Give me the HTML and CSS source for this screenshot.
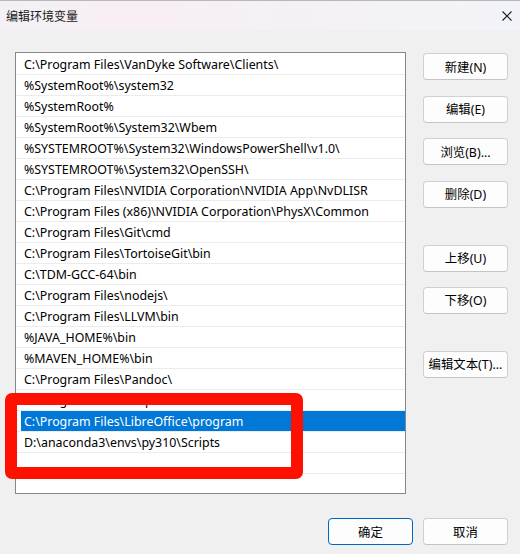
FILE: index.html
```html
<!DOCTYPE html>
<html lang="zh-CN">
<head>
<meta charset="utf-8">
<title>编辑环境变量</title>
<link rel="stylesheet" href="styles.css">
</head>
<body>
<div class="window">
  <div class="titlebar">
    <span class="title">编辑环境变量</span>
    <svg class="close" width="10" height="10" viewBox="0 0 10 10"><path d="M0.5 0.5L9.5 9.5M9.5 0.5L0.5 9.5" stroke="#1a1a1a" stroke-width="1.1" fill="none"/></svg>
  </div>
  <div class="content">
    <div class="main">
      <div class="listbox">
        <div class="row"><span class="cell">C:\Program Files\VanDyke Software\Clients\</span></div>
        <div class="row"><span class="cell">%SystemRoot%\system32</span></div>
        <div class="row"><span class="cell">%SystemRoot%</span></div>
        <div class="row"><span class="cell">%SystemRoot%\System32\Wbem</span></div>
        <div class="row"><span class="cell">%SYSTEMROOT%\System32\WindowsPowerShell\v1.0\</span></div>
        <div class="row"><span class="cell">%SYSTEMROOT%\System32\OpenSSH\</span></div>
        <div class="row"><span class="cell">C:\Program Files\NVIDIA Corporation\NVIDIA App\NvDLISR</span></div>
        <div class="row"><span class="cell">C:\Program Files (x86)\NVIDIA Corporation\PhysX\Common</span></div>
        <div class="row"><span class="cell">C:\Program Files\Git\cmd</span></div>
        <div class="row"><span class="cell">C:\Program Files\TortoiseGit\bin</span></div>
        <div class="row"><span class="cell">C:\TDM-GCC-64\bin</span></div>
        <div class="row"><span class="cell">C:\Program Files\nodejs\</span></div>
        <div class="row"><span class="cell">C:\Program Files\LLVM\bin</span></div>
        <div class="row"><span class="cell">%JAVA_HOME%\bin</span></div>
        <div class="row"><span class="cell">%MAVEN_HOME%\bin</span></div>
        <div class="row"><span class="cell">C:\Program Files\Pandoc\</span></div>
        <div class="row"><span class="cell">C:\Program Files\Graphviz\bin\</span></div>
        <div class="row selected"><span class="cell">C:\Program Files\LibreOffice\program</span></div>
        <div class="row"><span class="cell">D:\anaconda3\envs\py310\Scripts</span></div>
        <div class="row"><span class="cell"></span></div>
        <div class="row"><span class="cell"></span></div>
      </div>
      <div class="side">
        <div class="group group-a">
          <button class="btn">新建(N)</button>
          <button class="btn">编辑(E)</button>
          <button class="btn">浏览(B)...</button>
          <button class="btn">删除(D)</button>
        </div>
        <div class="group group-b">
          <button class="btn">上移(U)</button>
          <button class="btn">下移(O)</button>
        </div>
        <div class="group group-c">
          <button class="btn">编辑文本(T)...</button>
        </div>
      </div>
    </div>
    <div class="footer">
      <button class="btn primary">确定</button>
      <button class="btn">取消</button>
    </div>
  </div>
  <div class="mark"></div>
</div>
</body>
</html>
```

FILE: styles.css
```css
* { box-sizing: border-box; }
html, body { margin: 0; padding: 0; }
body {
  background: #f0f0f0;
  font-family: "Noto Sans", "Noto Sans CJK SC", sans-serif;
  font-size: 12px;
  color: #000;
}
.window {
  position: relative;
  width: 520px;
  height: 554px;
  background: #f0f0f0;
  overflow: hidden;
}
.titlebar {
  height: 30px;
  display: flex;
  align-items: center;
  justify-content: space-between;
  padding: 0 8px 0 6px;
  background: linear-gradient(90deg, #f3f1f5 0%, #f8eef4 25%, #f4f1f6 55%, #f2f3f8 100%);
  border-top: 1px solid #b8b8b8;
}
.title {
  font-family: "Noto Sans CJK SC", sans-serif;
  font-size: 12px;
  color: #1a1a1a;
}
.close { display: block; }
.content {
  padding: 22px 12px 0 15px;
}
.main {
  display: flex;
  gap: 17px;
}
.listbox {
  width: 392px;
  height: 442px;
  background: #fff;
  border: 1px solid #828790;
  padding-top: 1px;
  overflow: hidden;
}
.row {
  height: 21px;
  border-bottom: 1px solid #ececec;
  padding-left: 5px;
}
.cell {
  display: flex;
  align-items: center;
  height: 20px;
  padding-left: 3px;
  white-space: nowrap;
  font-size: 12.4px;
}
.selected .cell {
  background: #0078d7;
  color: #fff;
}
.side {
  display: flex;
  flex-direction: column;
  padding-top: 1px;
}
.group { display: flex; flex-direction: column; }
.group-a { gap: 15.67px; }
.group-b { gap: 15px; margin-top: 37px; }
.group-c { margin-top: 37px; }
.btn {
  width: 85px;
  height: 27px;
  padding: 0;
  background: #fdfdfd;
  border: 1px solid #d0d0d0;
  border-bottom-color: #c4c4c4;
  border-radius: 4px;
  font-family: "Noto Sans", "Noto Sans CJK SC", sans-serif;
  font-size: 12.4px;
  color: #000;
  text-align: center;
  white-space: nowrap;
}
.primary {
  border: 1px solid #0067c0;
}
.footer {
  display: flex;
  justify-content: flex-end;
  gap: 10px;
  margin-top: 24px;
}
.mark {
  position: absolute;
  left: 5px;
  top: 393px;
  width: 298px;
  height: 86px;
  border: 12px solid #fe1100;
  border-radius: 7px;
}
```
